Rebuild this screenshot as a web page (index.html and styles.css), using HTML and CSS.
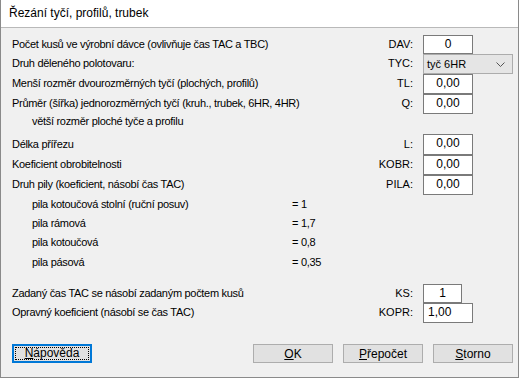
FILE: index.html
```html
<!DOCTYPE html>
<html>
<head>
    <title>Řezání tyčí, profilů, trubek</title>
    <link rel="stylesheet" href="styles.css">
</head>
<body>
<div class="window">
    <div class="titlebar">Řezání tyčí, profilů, trubek</div>
    <div class="content">

        <div class="row h19">
            <span class="label">Počet kusů ve výrobní dávce (ovlivňuje čas TAC a TBC)</span>
            <span class="code">DAV:</span>
            <span class="field w50 center">0</span>
        </div>
        <div class="row">
            <span class="label">Druh děleného polotovaru:</span>
            <span class="code">TYC:</span>
            <span class="combo">tyč 6HR
                <svg class="chevron" width="9" height="5" viewBox="0 0 9 5"><path d="M0.5 0.5 L4.5 4.5 L8.5 0.5" fill="none" stroke="#555" stroke-width="1"/></svg>
            </span>
        </div>
        <div class="row">
            <span class="label">Menší rozměr dvourozměrných tyčí (plochých, profilů)</span>
            <span class="code">TL:</span>
            <span class="field w50 center">0,00</span>
        </div>
        <div class="row">
            <span class="label">Průměr (šířka) jednorozměrných tyčí (kruh., trubek, 6HR, 4HR)</span>
            <span class="code">Q:</span>
            <span class="field w50 center">0,00</span>
        </div>
        <div class="row">
            <span class="label indent">větší rozměr ploché tyče a profilu</span>
        </div>
        <div class="row h21">
            <span class="label">Délka přířezu</span>
            <span class="code">L:</span>
            <span class="field w50 center">0,00</span>
        </div>
        <div class="row">
            <span class="label">Koeficient obrobitelnosti</span>
            <span class="code">KOBR:</span>
            <span class="field w50 center">0,00</span>
        </div>
        <div class="row">
            <span class="label">Druh pily (koeficient, násobí čas TAC)</span>
            <span class="code">PILA:</span>
            <span class="field w50 center">0,00</span>
        </div>

        <div class="saw h19">
            <span>pila kotoučová stolní (ruční posuv)</span>
            <span>= 1</span>
        </div>
        <div class="saw h19">
            <span>pila rámová</span>
            <span>= 1,7</span>
        </div>
        <div class="saw">
            <span>pila kotoučová</span>
            <span>= 0,8</span>
        </div>
        <div class="saw">
            <span>pila pásová</span>
            <span>= 0,35</span>
        </div>

        <div class="row h19 gap-top">
            <span class="label">Zadaný čas TAC se násobí zadaným počtem kusů</span>
            <span class="code">KS:</span>
            <span class="field w39 center">1</span>
        </div>
        <div class="row">
            <span class="label">Opravný koeficient (násobí se čas TAC)</span>
            <span class="code">KOPR:</span>
            <span class="field w50 left">1,00</span>
        </div>

        <div class="buttons">
            <button class="btn focused"><span class="focus-rect"><u>N</u>ápověda</span></button>
            <span class="spacer"></span>
            <button class="btn"><u>O</u>K</button>
            <button class="btn"><u>P</u>řepočet</button>
            <button class="btn"><u>S</u>torno</button>
        </div>
    </div>
</div>
</body>
</html>
```

FILE: styles.css
```css
html, body {
    margin: 0;
    padding: 0;
    background-color: #ffffff;
}

.window {
    width: 517px;
    height: 377px;
    border: 1px solid #8a8a8a;
    border-top: none;
    background-color: #f0f0f0;
    font-family: "Liberation Sans", Arial, sans-serif;
    font-size: 11px;
    color: #000;
}

.titlebar {
    height: 27px;
    line-height: 26px;
    padding-left: 8px;
    background-color: #ffffff;
    border-bottom: 1px solid #b9b9b9;
    font-size: 12px;
}

.content {
    padding: 7px 5px 0 11px;
}

/* label | code | input */
.row {
    display: grid;
    grid-template-columns: 1fr 60px 90px;
    column-gap: 10px;
    height: 20px;
    align-items: center;
}

.h19 { height: 19px; }
.h21 { height: 21px; }

.label {
    white-space: nowrap;
    padding-bottom: 2px;
    letter-spacing: -0.3px;
}

.indent {
    padding-left: 20px;
    padding-bottom: 6px;
}

.code {
    text-align: right;
    padding-bottom: 2px;
}

.field {
    box-sizing: border-box;
    height: 100%;
    background-color: #fff;
    border: 1px solid #7a7a7a;
    line-height: 17px;
    font-size: 12px;
}

.w50 { width: 50px; }
.w39 { width: 39px; }
.center { text-align: center; }
.left { text-align: left; padding-left: 4px; }

.combo {
    box-sizing: border-box;
    height: 100%;
    width: 90px;
    background-color: #e5e5e5;
    border: 1px solid #acacac;
    padding-left: 3px;
    line-height: 18px;
    position: relative;
}

.chevron {
    position: absolute;
    right: 7px;
    top: 7px;
}

.saw {
    display: grid;
    grid-template-columns: 260px 1fr;
    padding-left: 20px;
    padding-bottom: 2px;
    box-sizing: border-box;
    height: 20px;
    align-items: center;
    letter-spacing: -0.3px;
}

.saw.h19 { height: 19px; }

.gap-top {
    margin-top: 11px;
}

.buttons {
    display: flex;
    gap: 10px;
    margin-top: 21px;
}

.spacer {
    flex: 1;
}

.btn {
    width: 80px;
    height: 19px;
    padding: 0;
    background-color: #e1e1e1;
    border: 1px solid #adadad;
    font-family: "Liberation Sans", Arial, sans-serif;
    font-size: 12px;
    color: #000;
    line-height: 16px;
}

.btn.focused {
    border: 2px solid #0078d7;
    padding: 1px;
}

.focus-rect {
    display: block;
    height: 100%;
    box-sizing: border-box;
    border: 1px dotted #000;
    line-height: 11px;
}
```
